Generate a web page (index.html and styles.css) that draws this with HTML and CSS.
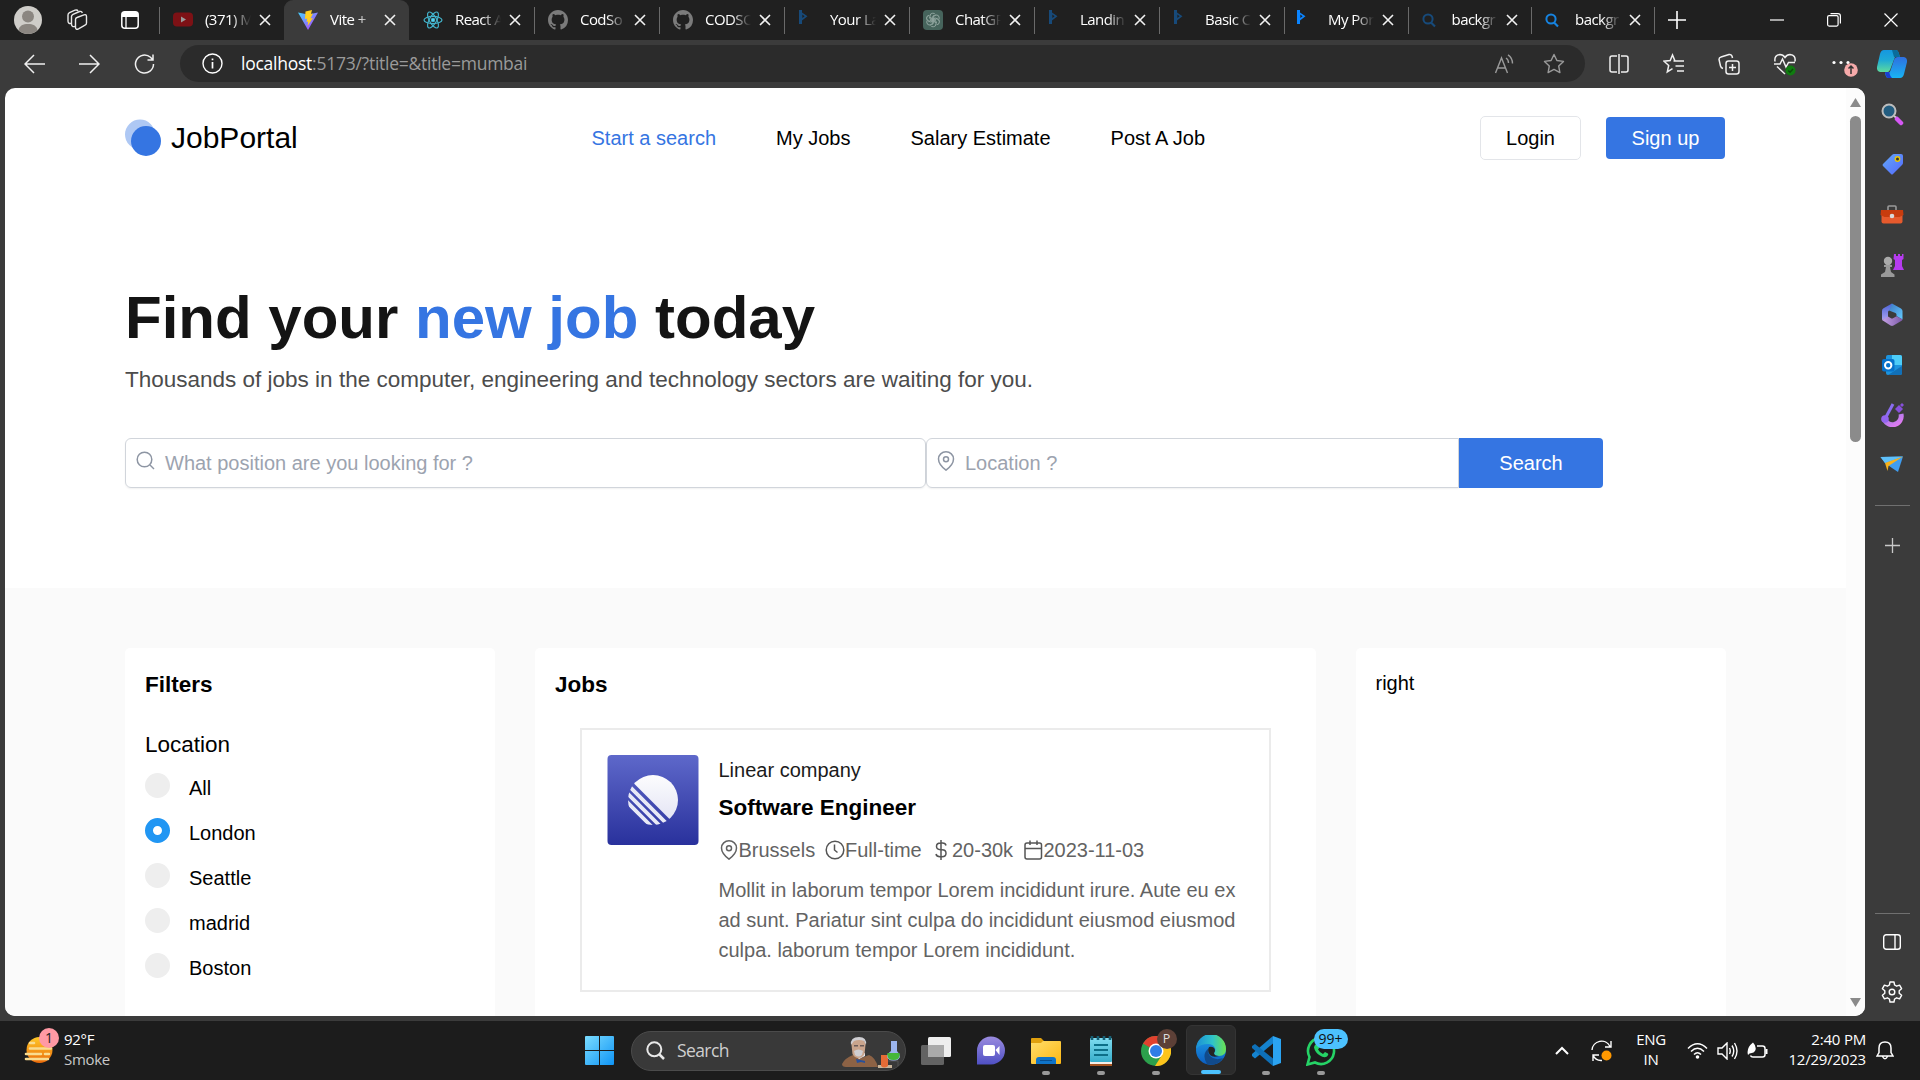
FILE: index.html
```html
<!DOCTYPE html>
<html lang="en">
<head>
<meta charset="utf-8">
<title>JobPortal</title>
<link rel="stylesheet" href="styles.css">
</head>
<body>
<svg class="defs" width="0" height="0" aria-hidden="true">
  <defs>
    <linearGradient id="gVite" x1="0" y1="0" x2="1" y2="1"><stop offset="0" stop-color="#41d1ff"/><stop offset="1" stop-color="#bd34fe"/></linearGradient>
    <linearGradient id="gBlue" x1="0" y1="0" x2="1" y2="1"><stop offset="0" stop-color="#7adcff"/><stop offset="1" stop-color="#0f94f5"/></linearGradient>
    <linearGradient id="gCopA" x1="0" y1="0" x2="0" y2="1"><stop offset="0" stop-color="#1597e0"/><stop offset=".45" stop-color="#1ea9d6"/><stop offset="1" stop-color="#5fdc9c"/></linearGradient>
    <linearGradient id="gCopB" x1="0" y1="0" x2="0" y2="1"><stop offset="0" stop-color="#2f6fe0"/><stop offset="1" stop-color="#18b4f2"/></linearGradient>
    <linearGradient id="gTag" x1="0" y1="0" x2="1" y2="1"><stop offset="0" stop-color="#63a9f6"/><stop offset="1" stop-color="#5468ff"/></linearGradient>
    <linearGradient id="gPurple" x1="0" y1="0" x2="1" y2="1"><stop offset="0" stop-color="#8f7bea"/><stop offset="1" stop-color="#e67bf0"/></linearGradient>
    <linearGradient id="gSun" x1="0" y1="0" x2="0" y2="1"><stop offset="0" stop-color="#ffc928"/><stop offset="1" stop-color="#ea6a0a"/></linearGradient>
    <linearGradient id="gChat" x1="0" y1="0" x2="0" y2="1"><stop offset="0" stop-color="#9a8bdf"/><stop offset="1" stop-color="#4f50c4"/></linearGradient>
    <linearGradient id="gFolder" x1="0" y1="0" x2="1" y2="1"><stop offset="0" stop-color="#ffdd6b"/><stop offset="1" stop-color="#fdb813"/></linearGradient>
    <linearGradient id="gNote" x1="0" y1="0" x2="0" y2="1"><stop offset="0" stop-color="#7fdcf0"/><stop offset="1" stop-color="#38aecb"/></linearGradient>
    <linearGradient id="gEdge" x1="0" y1="0" x2="1" y2="0"><stop offset="0" stop-color="#1b8fd8"/><stop offset=".55" stop-color="#2fc3c9"/><stop offset="1" stop-color="#6be24f"/></linearGradient>
    <linearGradient id="gEdgeB" x1="0" y1="0" x2="0" y2="1"><stop offset="0" stop-color="#1fa0e8"/><stop offset="1" stop-color="#0b5cc0"/></linearGradient>
    <linearGradient id="gLin" x1="0" y1="0" x2="0" y2="1"><stop offset="0" stop-color="#5e68ca"/><stop offset="1" stop-color="#29319c"/></linearGradient>
    <linearGradient id="gLinB" x1="0" y1="0" x2="0" y2="1"><stop offset="0" stop-color="#ffffff"/><stop offset="1" stop-color="#dedff2"/></linearGradient>
    <linearGradient id="gM1" x1="0" y1="0" x2="0" y2="1"><stop offset="0" stop-color="#4a63d8"/><stop offset="1" stop-color="#a9a0ee"/></linearGradient>
    <linearGradient id="gM2" x1="0" y1="0" x2="1" y2="1"><stop offset="0" stop-color="#3c78c4"/><stop offset="1" stop-color="#63cbff"/></linearGradient>
    <linearGradient id="gM3" x1="0" y1="0" x2="1" y2="0"><stop offset="0" stop-color="#c6a2e6"/><stop offset="1" stop-color="#7c5aa8"/></linearGradient>
    <clipPath id="cLin"><circle cx="46" cy="45" r="25"/></clipPath>
    <symbol id="x" viewBox="0 0 12 12"><path d="M1 1l10 10M11 1L1 11" stroke="#f2f2f2" stroke-width="1.600" fill="none"/></symbol>
    <symbol id="git" viewBox="0 0 16 16"><path fill="#7b7b7b" d="M8 0C3.58 0 0 3.58 0 8c0 3.54 2.29 6.53 5.47 7.59.4.07.55-.17.55-.38 0-.19-.01-.82-.01-1.49-2.01.37-2.53-.49-2.69-.94-.09-.23-.48-.94-.82-1.13-.28-.15-.68-.52-.01-.53.63-.01 1.08.58 1.23.82.72 1.21 1.87.87 2.33.66.07-.52.28-.87.51-1.07-1.78-.2-3.64-.89-3.64-3.95 0-.87.31-1.59.82-2.15-.08-.2-.36-1.02.08-2.12 0 0 .67-.21 2.2.82.64-.18 1.32-.27 2-.27s1.36.09 2 .27c1.53-1.04 2.2-.82 2.2-.82.44 1.1.16 1.92.08 2.12.51.56.82 1.27.82 2.15 0 3.07-1.87 3.75-3.65 3.95.29.25.54.73.54 1.48 0 1.07-.01 1.93-.01 2.2 0 .21.15.46.55.38A8.01 8.01 0 0 0 16 8c0-4.42-3.58-8-8-8z"/></symbol>
    <symbol id="pf" viewBox="0 0 20 20"><path d="M1 0h3v2.500l5.500 3.700L4 10.500V14H1z" fill="currentColor"/><path d="M4.300 4.500l2.300 1.700-2.300 1.900z" fill="#202020"/></symbol>
    <symbol id="mag" viewBox="0 0 20 20"><circle cx="8" cy="9" r="4.600" fill="none" stroke="currentColor" stroke-width="2"/><path d="M11 12.500l4 4" stroke="currentColor" stroke-width="2.200"/></symbol>
    <symbol id="pin" viewBox="0 0 24 24"><path d="M12 23s9-7 9-13.500a9 8.500 0 1 0-18 0C3 16 12 23 12 23z" fill="none" stroke="currentColor" stroke-width="1.800"/><circle cx="12" cy="9.800" r="3" fill="none" stroke="currentColor" stroke-width="1.800"/></symbol>
  </defs>
</svg>

<div class="screen">
  <header class="tabstrip">
    <div class="strip-tools">
      <svg class="avatar" width="28" height="28" viewBox="0 0 28 28"><circle cx="14" cy="14" r="14" fill="#cfcdc9"/><circle cx="14" cy="10.500" r="6" fill="#8b8681"/><path d="M4.500 24.200C5.500 19.500 9 18 14 18s8.500 1.500 9.500 6.200a14 14 0 0 1-19 0z" fill="#8b8681"/></svg>
      <svg width="22" height="22" viewBox="0 0 22 22" fill="none" stroke="#e8e8e8" stroke-width="1.400"><path d="M9.500 10.500q0-1.500 1.500-2l7-2.700q2.500-.8 2.500 1.700V14q0 1.500-1.500 2.200l-6.500 3.600q-3 1.500-3-1.500z"/><path d="M9 17.500q-3.500.8-3.500-2.500V7.500Q5.500 6 7 5.300l6.500-2.800q2.300-.7 2.800 1.500M5.300 14.500Q2 15 2 12V6q0-1.500 1.500-2.300L9 1.200q2.300-.7 3 .8"/></svg>
      <svg width="18" height="18" viewBox="0 0 18 18"><rect x=".8" y=".8" width="16.400" height="16.400" rx="3" fill="none" stroke="#fff" stroke-width="1.500"/><path d="M1 6V3q0-2 2-2h12q2 0 2 2v3z" fill="#fff"/><path d="M5 5v12" stroke="#fff" stroke-width="1.300"/></svg>
    </div>
    <nav class="tabs">
      <div class="tab"><svg class="fav" viewBox="0 0 20 20"><rect y="2.500" width="20" height="14" rx="4" fill="#7d1115"/><path d="M8 6.500l5 3-5 3z" fill="#999"/></svg><span class="tt">(371) M</span><svg class="cl"><use href="#x"/></svg></div>
      <div class="tab active"><svg class="fav" viewBox="0 0 20 20"><path d="M0 2.500L10 20 20 2.500 10 4.500z" fill="url(#gVite)"/><path d="M14 0L7.500 1.400 7 9l2.200-.5-.6 3.500 1.700-.5L9.500 16 15 8l-2.500.5L15 3.500l-2 .4z" fill="#ffcf1f"/></svg><span class="tt">Vite + </span><svg class="cl"><use href="#x"/></svg></div>
      <div class="tab nosep"><svg class="fav" viewBox="0 0 20 20" fill="none" stroke="#43b3cb" stroke-width="1.200"><ellipse cx="10" cy="10" rx="9" ry="3.600"/><ellipse cx="10" cy="10" rx="9" ry="3.600" transform="rotate(60 10 10)"/><ellipse cx="10" cy="10" rx="9" ry="3.600" transform="rotate(120 10 10)"/><circle cx="10" cy="10" r="1.600" fill="#61dafb"/></svg><span class="tt">React A</span><svg class="cl"><use href="#x"/></svg></div>
      <div class="tab"><svg class="fav"><use href="#git"/></svg><span class="tt">CodSo</span><svg class="cl"><use href="#x"/></svg></div>
      <div class="tab"><svg class="fav"><use href="#git"/></svg><span class="tt">CODSO</span><svg class="cl"><use href="#x"/></svg></div>
      <div class="tab"><svg class="fav dim"><use href="#pf"/></svg><span class="tt">Your La</span><svg class="cl"><use href="#x"/></svg></div>
      <div class="tab"><svg class="fav" viewBox="0 0 20 20"><rect width="20" height="20" rx="4" fill="#46645c"/><g fill="none" stroke="#8ea39d" stroke-width="1"><path id="k" d="M7 9V6.200q0-3 2.800-3 1.700 0 2.600 1.300M7 9l3 1.800 4.500-2.600"/><use href="#k" transform="rotate(60 10 10)"/><use href="#k" transform="rotate(120 10 10)"/><use href="#k" transform="rotate(180 10 10)"/><use href="#k" transform="rotate(240 10 10)"/><use href="#k" transform="rotate(300 10 10)"/></g></svg><span class="tt">ChatGP</span><svg class="cl"><use href="#x"/></svg></div>
      <div class="tab"><svg class="fav dim"><use href="#pf"/></svg><span class="tt">Landin</span><svg class="cl"><use href="#x"/></svg></div>
      <div class="tab"><svg class="fav dim"><use href="#pf"/></svg><span class="tt">Basic C</span><svg class="cl"><use href="#x"/></svg></div>
      <div class="tab slim"><svg class="fav bright"><use href="#pf"/></svg><span class="tt">My Por</span><svg class="cl"><use href="#x"/></svg></div>
      <div class="tab slim"><svg class="fav dim"><use href="#mag"/></svg><span class="tt">backgr</span><svg class="cl"><use href="#x"/></svg></div>
      <div class="tab slim"><svg class="fav lens"><use href="#mag"/></svg><span class="tt">backgr</span><svg class="cl"><use href="#x"/></svg></div>
    </nav>
    <svg class="plus" width="18" height="18" viewBox="0 0 18 18" stroke="#fff" stroke-width="1.600"><path d="M9 0v18M0 9h18"/></svg>
    <div class="win">
      <svg width="14" height="14" viewBox="0 0 14 14" stroke="#fff" stroke-width="1.200"><path d="M0 7h14"/></svg>
      <svg width="14" height="14" viewBox="0 0 14 14" stroke="#fff" stroke-width="1.200" fill="none"><rect x=".6" y="2.600" width="10.500" height="10.500" rx="1.500"/><path d="M3.500.7h7.500q2.400 0 2.400 2.300v7.500"/></svg>
      <svg width="14" height="14" viewBox="0 0 14 14" stroke="#fff" stroke-width="1.200"><path d="M.5.5l13 13M13.500.5l-13 13"/></svg>
    </div>
  </header>

  <div class="toolbar">
    <div class="nav-btns">
      <svg width="21" height="20" viewBox="0 0 21 20"><path d="M10 1L1 10l9 9M1 10h20"/></svg>
      <svg width="21" height="20" viewBox="0 0 21 20"><path d="M11 1l9 9-9 9M20 10H0"/></svg>
      <svg width="21" height="20" viewBox="0 0 21 20"><path d="M19.500 10a9 9 0 1 1-3-6.700L18.500 5.500M19 .5v5.500h-5.500"/></svg>
    </div>
    <div class="address">
      <svg width="21" height="21" viewBox="0 0 21 21" fill="none" stroke="#fff" stroke-width="1.400"><circle cx="10.500" cy="10.500" r="9.500"/><path d="M10.500 9v6.500M10.500 5.500v1.800" stroke-width="1.700"/></svg>
      <span class="url"><b>localhost</b>:5173/?title=&amp;title=mumbai</span>
      <svg width="20" height="20" viewBox="0 0 20 20" fill="none" stroke="#9a9a9a" stroke-width="1.400"><path d="M1.500 19L7.500 4l6 15M3.500 14h8M12 4q2.500 1.500 2.500 5M14 .8q4.500 3 4.500 8.700"/></svg>
      <svg width="22" height="22" viewBox="0 0 22 22" fill="none" stroke="#9a9a9a" stroke-width="1.400" stroke-linejoin="round"><path d="M11 1.500l2.900 6 6.600.9-4.800 4.600 1.200 6.600-5.900-3.200-5.900 3.200L6.300 13 1.500 8.400l6.600-.9z"/></svg>
    </div>
    <div class="tools">
      <svg width="22" height="22" viewBox="0 0 22 22"><path d="M9 3H4Q2 3 2 5v12q0 2 2 2h5M13 3h5q2 0 2 2v12q0 2-2 2h-5M11 1v20"/></svg>
      <svg width="22" height="22" viewBox="0 0 22 22"><path d="M12 8L9.500 2 7.200 7.500 1 8.200l4.700 4.300L4.300 19l5.200-3.300M10.500 8H21M12.500 13H21M14 18h7"/></svg>
      <svg width="22" height="22" viewBox="0 0 22 22"><rect x="8" y="8" width="13" height="13" rx="2.500"/><path d="M14.500 11v7M11 14.500h7M5 15.500Q3 15 2.500 13L1 6.500Q1 4.500 3 4l8-2.500q2-.5 3 1.500l.5 2"/></svg>
      <svg width="24" height="24" viewBox="0 0 24 24"><path d="M2 9.500Q1 3 7 2.500q3 0 5 3 2-3 5-3 6 .5 5 7M1 12h6l2.500-5 3.500 8 2.500-4.500H22M4 14.500l8 7.500"/><circle cx="17.500" cy="18.500" r="5" fill="#107c10" stroke="none"/><path d="M15.300 18.500l1.700 1.700 3-3.200" stroke="#0a4a0a"/></svg>
      <svg width="26" height="28" viewBox="0 0 26 28"><g fill="#fff" stroke="none"><circle cx="2" cy="12.500" r="1.600"/><circle cx="9" cy="12.500" r="1.600"/><circle cx="16" cy="12.500" r="1.600"/></g><circle cx="19" cy="20" r="6.800" fill="#f6aaaa" stroke="none"/><path d="M19 24v-8M16.500 18.500l2.500-2.500 2.500 2.500" stroke="#333"/></svg>
    </div>
    <svg class="copilot" width="30" height="28" viewBox="0 0 30 28"><path d="M7 0h12q2 0 3 4l1 3h-5L13 20q-1.500 3-5 2H3q-3.500-.5-3-5L3 4q1-4 4-4z" fill="url(#gCopA)"/><path d="M15 0h4q2 0 3 4l1 3h-6z" fill="#0a6c9c"/><path d="M23 28H11q-2 0-3-5h3q2 0 3-4l3-9q1-3 4-3h6q3.500.5 3 5l-3 12q-1 4-4 4z" fill="url(#gCopB)"/><path d="M8 22h4q1 4 3 6h-4q-2 0-3-6z" fill="#1b3fd0"/></svg>
  </div>

  <div class="middle">
    <main class="page">
      <div class="content">
        <div class="navbar">
          <div class="brand"><svg width="37" height="38" viewBox="0 0 37 38"><circle cx="15" cy="15.500" r="15" fill="#aec8f4"/><circle cx="21" cy="22" r="15" fill="#3575e2"/></svg><span>JobPortal</span></div>
          <div class="links"><a class="on">Start a search</a><a>My Jobs</a><a>Salary Estimate</a><a>Post A Job</a></div>
          <div class="auth"><a class="login">Login</a><a class="signup">Sign up</a></div>
        </div>
        <section class="hero">
          <h1>Find your <em>new job</em> today</h1>
          <p>Thousands of jobs in the computer, engineering and technology sectors are waiting for you.</p>
          <div class="search">
            <div class="field what"><svg width="20" height="20" viewBox="0 0 20 20" fill="none" stroke="#8d95a3" stroke-width="1.500"><circle cx="8.500" cy="8.500" r="7.300"/><path d="M14 14l4 4"/></svg><span>What position are you looking for ?</span></div>
            <div class="field where"><svg width="20" height="20"><use href="#pin"/></svg><span>Location ?</span></div>
            <div class="go">Search</div>
          </div>
        </section>
        <section class="board">
          <aside class="card filters">
            <h2>Filters</h2>
            <h3>Location</h3>
            <ul>
              <li><i></i>All</li><li><i class="sel"></i>London</li><li><i></i>Seattle</li><li><i></i>madrid</li><li><i></i>Boston</li>
            </ul>
          </aside>
          <div class="card jobs">
            <h2>Jobs</h2>
            <article class="job">
              <svg class="logo" width="92" height="90" viewBox="0 0 92 90"><rect x=".5" width="91" height="90" rx="4" fill="url(#gLin)"/><g clip-path="url(#cLin)"><path d="M18 19.500L74 75.500V15H18z" fill="url(#gLinB)"/><g stroke="#e8e9f6" stroke-width="3.800"><path d="M14 23l60 60M14 32l60 60M14 41l60 60"/></g></g></svg>
              <div class="info">
                <div class="co">Linear company</div>
                <h4>Software Engineer</h4>
                <div class="meta">
                  <span><svg width="20" height="20"><use href="#pin"/></svg>Brussels</span>
                  <span><svg width="20" height="20" viewBox="0 0 20 20"><circle cx="10" cy="10" r="8.800"/><path d="M9.500 4.500V10l3 2.500"/></svg>Full-time</span>
                  <span><svg width="20.500" height="20" viewBox="0 0 20.500 20"><path d="M10 0v20M15 5.500Q14.500 3 11.500 3H9.500Q5.500 3 5.500 6.300t4 3.400h1.500q4 0 4 3.500t-4 3.500H9Q5.500 16.700 5 14"/></svg>20-30k</span>
                  <span><svg width="20.500" height="20" viewBox="0 0 20.500 20"><rect x="2" y="3" width="16.500" height="16" rx="2"/><path d="M2 8.500h16.500M7 .5V5M14 .5V5"/></svg>2023-11-03</span>
                </div>
                <p>Mollit in laborum tempor Lorem incididunt irure. Aute eu ex ad sunt. Pariatur sint culpa do incididunt eiusmod eiusmod culpa. laborum tempor Lorem incididunt.</p>
              </div>
            </article>
          </div>
          <aside class="card right">right</aside>
        </section>
      </div>
      <div class="scroll"><svg width="11" height="9" viewBox="0 0 11 9"><path d="M5.500 0L11 9H0z" fill="#8b8b8b"/></svg><div class="thumb"></div><svg class="down" width="11" height="9" viewBox="0 0 11 9"><path d="M5.500 9L11 0H0z" fill="#8b8b8b"/></svg></div>
    </main>
    <aside class="side">
      <div class="apps">
        <svg viewBox="0 0 24 24"><path d="M14 14l4 3" stroke="#ccc" stroke-width="2"/><path d="M17 17l4 4" stroke="#d658f5" stroke-width="4.500" stroke-linecap="round"/><circle cx="9" cy="9" r="6.500" fill="#235d80" stroke="#bdbdbd" stroke-width="2"/></svg>
        <svg viewBox="0 0 24 24"><path d="M14 2h7q2 0 2 2v7q0 1-1 2l-9 9q-1 1-2 0l-8-8q-1-1 0-2l9-9q1-1 2-1z" fill="url(#gTag)"/><circle cx="17.500" cy="7" r="2.200" fill="#333" stroke="#e8c60a" stroke-width="1.400"/></svg>
        <svg viewBox="0 0 24 24"><path d="M8 8V5q0-1 1-1h6q1 0 1 1v3" fill="none" stroke="#9a9a9a" stroke-width="1.600"/><rect x="1.500" y="11" width="21" height="10.500" rx="2" fill="#e65a2d"/><path d="M1 8h22l.5 5-4 2h-15L.5 13z" fill="#c83c0e"/><circle cx="12" cy="14" r="2.300" fill="#d9d9d9"/></svg>
        <svg viewBox="0 0 24 24"><path d="M14 1h2v2h2V1h2v2h2V1h1.500v5L22 7v6l2 4H13l2-4V7l-1.500-1z" fill="#b63bf0"/><circle cx="8" cy="8" r="4.200" fill="#aaa"/><path d="M4 12h8v2h-2l1 5 3.500 2.500V24H1v-2.500L5 19l1-5H4z" fill="#999"/></svg>
        <svg viewBox="0 0 24 24"><path d="M12 .5L3.500 5.200Q2 6 2 8v9l6-2.500V9q0-1 1-1.600l3.500-2z" fill="url(#gM1)"/><path d="M12 .5l9 5q1.500 1 1.500 2.500v8.500L16.500 13v-1.500q0-1-1-1.600L9 7.500z" fill="url(#gM2)"/><path d="M2 17l6-3.500 3 1.700q1 .5 2 0l3.500-2 6 3-.5 1.300-8.500 5q-1.500.9-3 0z" fill="url(#gM3)"/></svg>
        <svg viewBox="0 0 24 24"><rect x="6" y="2" width="16" height="20" rx="2" fill="#1d94dd"/><path d="M12 2h8q2 0 2 2v8H12z" fill="#4dcdf8"/><path d="M8 22l14-9v7q0 2-2 2z" fill="#1170b8"/><rect x="2" y="6" width="12.500" height="12.500" rx="2" fill="#0672cb"/><circle cx="8.200" cy="12.200" r="3.200" fill="none" stroke="#fff" stroke-width="2"/></svg>
        <svg viewBox="0 0 24 24"><path d="M4 15a8.500 8.500 0 1 0 17-4" fill="none" stroke="url(#gPurple)" stroke-width="5"/><path d="M13 1L6 14" stroke="#8a6cf0" stroke-width="3"/><circle cx="5" cy="16" r="3.800" fill="#9264ee"/><path d="M15 6l4-4 4 4-4 4zM20 2l2-2 2 2-2 2z" fill="#8750dc"/></svg>
        <svg viewBox="0 0 24 24"><path d="M.5 4L23 3.500 18 19l-6-4-7-5z" fill="#3f9df0"/><path d="M.5 4L23 3.500 5 10z" fill="#5fc1fb"/><path d="M5 10l18-6.500L8.500 13 7.500 18z" fill="#f7b21c"/></svg>
      </div>
      <hr>
      <svg class="add" width="15" height="15" viewBox="0 0 15 15" stroke="#c9c9c9" stroke-width="1.300"><path d="M7.500 0v15M0 7.500h15"/></svg>
      <hr class="low">
      <svg class="panel" width="18" height="16" viewBox="0 0 18 16" fill="none" stroke="#fff" stroke-width="1.400"><rect x=".7" y=".7" width="16.600" height="14.600" rx="2.500"/><path d="M12 1v14"/></svg>
      <svg class="gear" width="22" height="22" viewBox="0 0 22 22" fill="none" stroke="#fff" stroke-width="1.400" stroke-linejoin="round"><path d="M9 1h4l.6 3 2 1.200 3-1 2 3.500-2.400 2.100v2.400l2.400 2.100-2 3.500-3-1-2 1.200L13 21H9l-.6-3-2-1.200-3 1-2-3.500 2.400-2.100V9.800L1.400 7.700l2-3.500 3 1 2-1.200z"/><circle cx="11" cy="11" r="2.800"/></svg>
    </aside>
  </div>

  <footer class="taskbar">
    <div class="weather">
      <div class="wicon"><svg width="30" height="30" viewBox="0 0 30 30"><circle cx="15.500" cy="14" r="13" fill="url(#gSun)"/><g stroke="#f9dc90" stroke-width="2.600" stroke-linecap="round"><path d="M6 7h4M6 12.500h21M2 18h15M21 18h4M2 23h22"/></g></svg><span class="wbadge">1</span></div>
      <div class="wtext"><span>92°F</span><span class="soft">Smoke</span></div>
    </div>
    <svg class="start" width="29" height="29" viewBox="0 0 29 29"><path d="M0 1q0-1 1-1h13v14H0zM15 0h13q1 0 1 1v13H15zM0 15h14v14H1q-1 0-1-1zM15 15h14v13q0 1-1 1H15z" fill="url(#gBlue)"/></svg>
    <div class="tsearch">
      <svg width="19" height="19" viewBox="0 0 19 19" fill="none" stroke="#e8e8e8" stroke-width="2"><circle cx="8.300" cy="8.300" r="7"/><path d="M13.500 13.500l4.500 4.500" stroke-width="2.500"/></svg>
      <span>Search</span>
      <svg class="scene" width="58" height="32" viewBox="0 0 58 32"><path d="M0 27q3-6 11-9l8 3 8-3q6 2 9 12H4q-4 0-4-3z" fill="#8c6245"/><path d="M12 17l5 5 6-3v-3z" fill="#e9e9ee"/><path d="M14 22l9 2v2l-4-1-4 1z" fill="#28509b"/><path d="M9.500 8q0-6 7-6t7 6l-1 9q-2 4-6 4t-6-4z" fill="#c9a48c"/><path d="M9 8q-1-8 8-8 8 0 7 8l-2-4q-5-2-10 0zM12 14q4.500-3 9 0l-1 4q-3.500 3-7 0z" fill="#cfced2"/><path d="M12 8h4v1.500h-4zM18 8h4v1.500h-4z" fill="#6b5b58"/><path d="M36 28h14v3H36z" fill="#c8b59b"/><path d="M39 18h7v11q-4 3-7 0z" fill="#e66b36"/><path d="M49 4h6v10q3 3 3 6-2 4-6.500 4T45 20q0-3 4-6z" fill="#9cb5ee"/><path d="M45.500 16h12q1 7-6 7-7 0-6-7z" fill="#45b739"/><path d="M46 24h10v5" fill="none" stroke="#555"/></svg>
    </div>
    <div class="tapps">
      <div class="app"><svg width="30" height="28" viewBox="0 0 30 28"><rect y="8" width="23" height="20" rx="1.500" fill="#636363"/><rect x="7" width="23" height="20" rx="1.500" fill="#eee"/><path d="M7 8h16v12H7z" fill="#aaa"/></svg></div>
      <div class="app"><svg class="chat" width="29" height="29" viewBox="0 0 29 29"><path d="M1 28.500V15A14 14 0 1 1 15 28.500z" fill="url(#gChat)"/><rect x="7" y="9" width="12" height="11" rx="2" fill="#fff"/><path d="M19.500 14l4-4v9z" fill="#fff"/></svg></div>
      <div class="app run"><svg width="30" height="28" viewBox="0 0 30 28"><path d="M0 2q0-1 1-1h9l3 3h6v5H0z" fill="#e0a00e"/><path d="M0 6h10l2-2h17q1 0 1 1v21q0 1-1 1H1q-1 0-1-1z" fill="url(#gFolder)"/><path d="M5 27v-4q0-3 3-3h14q3 0 3 3v4z" fill="#0f74c9"/><path d="M9 23.500h12" stroke="#084f92"/></svg></div>
      <div class="app run"><svg width="24" height="30" viewBox="0 0 24 30"><path d="M1 26h22v4H1z" fill="#a65420"/><path d="M1 25h22v3H1z" fill="#f5eee8"/><rect x="1" y="2" width="22" height="24" rx="1" fill="url(#gNote)"/><path d="M3 0v4M9 0v4M15 0v4M21 0v4" stroke="#165f74" stroke-width="2.600"/><path d="M5 9h14M5 14h14M5 19h14" stroke="#0d6f88" stroke-width="2"/></svg></div>
      <div class="app run"><svg width="30" height="30" viewBox="0 0 30 30"><circle cx="15" cy="15" r="15" fill="#2ca04c"/><path d="M15 15L2 7.500a15 15 0 0 1 26 0z" fill="#e1412e"/><path d="M15 8h13.300A15 15 0 0 1 14 30l7-11z" fill="#fdc41c"/><circle cx="15" cy="15" r="7.500" fill="#fff"/><circle cx="15" cy="15" r="6" fill="#2f7de6"/></svg><span class="prof">P</span></div>
      <div class="app run cur"><svg width="30" height="30" viewBox="0 0 30 30"><circle cx="15" cy="15" r="15" fill="url(#gEdgeB)"/><path d="M0 14A15 15 0 0 1 30 14q0 7-7 7-5 0-5-3 2-2 1-5-2-4-7-4Q4 9 0 14z" fill="url(#gEdge)"/><path d="M11 29Q5 19 13 13q-2 4 1 8 5 5 13 2-6 9-16 6z" fill="#114a8b"/><path d="M13 12q5-1 6 3 0 2-1 3 0 3 5 3-6 2-9-1-3-4-1-8z" fill="#242424"/></svg></div>
      <div class="app run"><svg width="30" height="30" viewBox="0 0 30 30"><path d="M22 7.500L4 22.500 1 20v-2L22 0z" fill="#1583cf"/><path d="M22 22.500L4 8 1 10v2l21 18z" fill="#0e70b8"/><path d="M22 0l8 3v24l-8 3z" fill="#2ba4f2"/></svg></div>
      <div class="app run"><svg width="30" height="30" viewBox="0 0 30 30"><path d="M1.500 28.500l2-7.500A13 13 0 1 1 9 26.500z" fill="none" stroke="#25d366" stroke-width="2.600"/><path d="M10 8q2-1 3 2l.5 1.500-1.500 2q2 3.500 5 4.500l2-2 3 1.500q1 1-1 3-3 2-7-1-5-3-6-8 0-2 2-3.500z" fill="#25d366"/></svg><span class="count">99+</span></div>
    </div>
    <div class="tray">
      <svg class="chev" width="14" height="9" viewBox="0 0 14 9" fill="none" stroke="#fff" stroke-width="2"><path d="M1 8l6-6 6 6"/></svg>
      <svg class="sync" width="22" height="22" viewBox="0 0 22 22" fill="none" stroke="#fff" stroke-width="1.400"><path d="M1 10A9.500 9.500 0 0 1 19 6.500M20 1v6h-6M11 20.500a9 9 0 0 1-9-5.500M8 15H2v6"/><circle cx="15.500" cy="15.500" r="5" fill="#ff9800" stroke="none"/></svg>
      <div class="lang">ENG<br>IN</div>
      <svg class="wifi" width="21" height="18" viewBox="0 0 21 18" fill="none" stroke="#fff" stroke-width="1.500"><path d="M1 6.500q9.500-9.500 19 0M4 9.500q6.500-6.500 13 0M7 12.500q3.500-3.500 7 0"/><circle cx="10.500" cy="15" r="1.800" fill="#fff" stroke="none"/></svg>
      <svg class="vol" width="21" height="18" viewBox="0 0 21 18" fill="none" stroke="#fff" stroke-width="1.400"><path d="M1 6h4l5-5v16l-5-5H1zM12.500 6q1.500 3 0 6M15 3.500q3.500 5.500 0 11M17.500 1q5 8 0 16"/></svg>
      <svg class="bat" width="21" height="18" viewBox="0 0 21 18" fill="none" stroke="#fff" stroke-width="1.500"><path d="M10 4h5.500q2.500 0 2.500 2.500v6q0 2.500-2.500 2.500H6q-2 0-2.500-1.500"/><path d="M19.500 7v5" stroke-width="2"/><path d="M1 13q-2-7 5-12.500Q9.500 4 8.500 8q-1 3-6 3.500z" fill="#fff" stroke="none"/></svg>
      <div class="clock">2:40 PM<br>12/29/2023</div>
      <svg class="bell" width="18" height="19" viewBox="0 0 18 19" fill="none" stroke="#fff" stroke-width="1.500"><path d="M1 15l2-3.500V7q0-6 6-6t6 6v4.500l2 3.500zM6.500 15.500q2.500 4.500 5 0"/></svg>
    </div>
  </footer>
</div>
</body>
</html>
```
FILE: styles.css
```css
* { box-sizing: border-box; }
body { margin: 0; background: #3b3b3b; font-family: "Liberation Sans", Arial, sans-serif; }
svg { display: block; flex: none; }
.defs { position: absolute; }
h1, h2, h3, h4, p, ul { margin: 0; padding: 0; }
.screen { width: 1920px; height: 1080px; overflow: hidden; display: flex; flex-direction: column; }

/* browser tab strip */
.tabstrip { height: 40px; background: #202020; display: flex; align-items: center; flex: none; font-family: "Open Sans", sans-serif; }
.strip-tools { width: 159px; padding-left: 14px; display: flex; align-items: center; flex: none; }
.strip-tools svg + svg { margin-left: 24px; }
.strip-tools svg + svg + svg { margin-left: 33px; }
.tabs { display: flex; height: 40px; flex: none; }
.tab { width: 125px; display: flex; align-items: center; border-left: 1px solid #666; border-image: linear-gradient(transparent 8px, #6a6a6a 8px, #6a6a6a 33px, transparent 33px) 1; padding-left: 13px; }
.tab.slim { width: 123.500px; padding-left: 11px; }
.tab.slim:last-child { border-right: 1px solid #666; }
.tab.active { background: #3b3b3b; border-image: none; border-color: #3b3b3b; border-radius: 9px 9px 0 0; }
.tab.nosep { border-image: none; border-color: transparent; }
.fav { width: 20px; height: 20px; }
.dim { color: #174a7a; }
.bright { color: #0a84ff; }
.lens { color: #1683e0; }
.tt { width: 56px; margin-left: 12px; padding-bottom: 1px; white-space: nowrap; font-size: 15px; line-height: 21px; letter-spacing: -0.55px; color: #fff; -webkit-mask-image: linear-gradient(90deg, #000 27px, transparent 46px); mask-image: linear-gradient(90deg, #000 27px, transparent 46px); }
.cl { width: 12px; height: 12px; margin-left: -2px; }
.plus { margin-left: 13px; margin-bottom: 1px; }
.win { display: flex; margin-left: auto; margin-right: 22px; margin-bottom: 1px; gap: 43px; }

/* browser toolbar */
.toolbar { height: 48px; flex: none; display: flex; align-items: center; padding-bottom: 1px; }
.nav-btns { width: 180px; padding-left: 24px; display: flex; gap: 34px; flex: none; fill: none; stroke: #f0f0f0; stroke-width: 1.500px; }
.address { width: 1405px; height: 37px; border-radius: 19px; background: #2b2b2b; display: flex; align-items: center; padding: 0 20px 0 22px; flex: none; }
.url { flex: 1; margin-left: 18px; padding-bottom: 1px; font: 17.500px "Open Sans", sans-serif; letter-spacing: -0.25px; color: #9a9a9a; }
.url b { font-weight: 400; color: #fff; }
.address svg:last-child { margin-left: 29px; }
.tools { display: flex; align-items: center; gap: 33px; margin-left: 23px; fill: none; stroke: #f0f0f0; stroke-width: 1.500px; }
.tools svg:last-child { margin-left: 2px; }
.copilot { margin-left: 19px; }

/* viewport and edge sidebar */
.middle { height: 933px; display: flex; flex: none; padding-left: 5px; }
.page { width: 1860px; height: 928px; background: #fff; border-radius: 10px; overflow: hidden; display: flex; }
.content { width: 1841px; overflow: hidden; }
.scroll { width: 19px; background: #fcfcfc; display: flex; flex-direction: column; align-items: center; padding: 10px 0 9px; }
.thumb { width: 11px; height: 326px; border-radius: 6px; background: #8b8b8b; margin-top: 9px; }
.down { margin-top: auto; }
.side { width: 55px; display: flex; flex-direction: column; align-items: center; padding: 14px 1px 0 0; }
.apps { display: flex; flex-direction: column; gap: 26.200px; }
.apps svg { width: 24px; height: 24px; }
.side hr { width: 35px; height: 1px; border: 0; background: #707070; margin: 28px 0 0; }
.side .add { margin-top: 32px; }
.side .low { margin-top: 360px; }
.panel { margin-top: 20px; }
.gear { margin-top: 31px; }

/* site header */
.navbar { height: 100px; margin: 0 121px 0 120px; display: grid; grid-template-columns: 466.500px 1fr auto; align-items: center; font-size: 20px; }
.brand { display: flex; align-items: center; gap: 9px; font-size: 30px; color: #000; }
.links { display: flex; gap: 60px; }
.on { color: #3575e2; }
.auth { display: flex; align-items: center; gap: 25px; }
.login { width: 101px; height: 44px; line-height: 42px; border: 1px solid #e3e5e9; border-radius: 5px; text-align: center; }
.signup { width: 119px; height: 42px; line-height: 42px; background: #3575e2; color: #fff; border-radius: 4px; text-align: center; }

/* hero */
.hero { height: 400px; padding: 100px 120px 0; }
.hero h1 { font-size: 60px; line-height: 60px; color: #141414; }
.hero em { font-style: normal; color: #3575e2; }
.hero p { font-size: 22.500px; line-height: 35px; margin-top: 14px; color: #4c4c4c; }
.search { display: flex; height: 50px; margin-top: 41px; }
.field { display: flex; align-items: center; border: 1.500px solid #d1d5db; color: #9ca3af; font-size: 20px; padding-left: 10px; gap: 9px; }
.field svg { color: #8d95a3; margin-bottom: 4px; }
.what { width: 801px; border-radius: 6px; box-shadow: 0 1px 2px rgba(0,0,0,.06); }
.where { width: 533px; border-radius: 6px 0 0 6px; box-shadow: 0 1px 2px rgba(0,0,0,.06); padding-left: 9px; }
.go { width: 144px; background: #3575e2; color: #fff; font-size: 20px; line-height: 50px; text-align: center; border-radius: 0 4px 4px 0; }

/* listing */
.board { background: #fafafa; height: 900px; padding: 60px 120px; display: grid; grid-template-columns: 370px 781.500px 370px; column-gap: 39.500px; }
.card { background: #fff; border-radius: 5px; padding: 20px; }
.card h2 { font-size: 22.500px; line-height: 34px; padding-bottom: 1px; font-weight: 700; }
.card h3 { font-size: 22.500px; line-height: 34px; font-weight: 400; margin-top: 25px; }
.card ul { list-style: none; margin-top: 11px; }
.card li { display: flex; gap: 19px; height: 45px; font-size: 20px; line-height: 30px; }
.card li i { width: 25px; height: 25px; border-radius: 50%; background: #eee; flex: none; }
.card li .sel { border: 8px solid #2196f3; background: #fff; }
.jobs { padding-left: 20.500px; }
.right { font-size: 20px; line-height: 30px; }
.job { margin: 25px 25px 0; width: 691px; height: 264px; border: 2px solid #ebebeb; padding: 25px; display: flex; gap: 19.500px; }
.info { width: 525px; font-size: 20px; color: #636363; }
.co { line-height: 30px; color: #1b1b1b; }
.info h4 { font-size: 22.500px; line-height: 35px; margin-top: 5px; color: #000; }
.meta { display: flex; gap: 9.800px; margin-top: 10px; line-height: 30px; }
.meta span { display: flex; align-items: center; }
.meta svg { fill: none; stroke: #555; stroke-width: 1.500px; }
.info p { line-height: 30px; margin-top: 10px; }

/* taskbar */
.taskbar { height: 59px; background: #1c1c1c; color: #fff; display: flex; align-items: center; flex: none; font-family: "Open Sans", sans-serif; font-size: 15px; }
.weather { width: 585px; padding-left: 24px; display: flex; align-items: center; gap: 10px; flex: none; }
.wicon { position: relative; }
.wbadge { position: absolute; left: 15px; top: -8px; width: 20px; height: 20px; border-radius: 50%; background: #ff99a4; color: #222; text-align: center; line-height: 20px; font-size: 14px; }
.wtext { display: flex; flex-direction: column; line-height: 20px; letter-spacing: -0.3px; padding-bottom: 4px; }
.soft { color: #c8c8c8; }
.tsearch { width: 275px; height: 40px; margin-left: 17px; border-radius: 20px; border: 1px solid #4b4b4b; background: #393939; display: flex; align-items: center; padding-left: 14px; flex: none; font-size: 17.500px; color: #cfcfcf; }
.tsearch span { margin-left: 12px; width: 60px; letter-spacing: -0.6px; padding-bottom: 2px; }
.scene { margin-left: 105px; margin-top: 4px; }
.tapps { display: flex; margin-left: 2.500px; flex: none; }
.app { width: 55px; height: 51px; display: flex; align-items: center; justify-content: center; position: relative; }
.chat { margin-right: 2px; }
.run::after { content: ""; position: absolute; left: 23.500px; bottom: 1px; width: 8px; height: 4px; border-radius: 2px; background: #999; }
.cur { width: 50px; margin: 0 2.500px; height: 50px; background: #2b2b2b; border: 1px solid #343434; border-radius: 6px; }
.cur::after { left: 14px; bottom: 0; width: 20px; background: #4cc2ff; }
.prof { position: absolute; left: 28px; top: 4px; width: 20px; height: 20px; border-radius: 50%; background: #5d4037; color: #ddd; font-size: 12.500px; line-height: 20px; text-align: center; }
.count { position: absolute; left: 20px; top: 4px; width: 34px; height: 20px; border-radius: 10px; background: #4cc2ff; color: #111; font-size: 14px; line-height: 20px; text-align: center; }
.tray { display: flex; align-items: center; margin-left: auto; padding-right: 26px; line-height: 20px; letter-spacing: -0.3px; }
.chev { margin-right: -1px; }
.sync { margin-left: 23px; }
.lang { width: 40px; margin-left: 18px; text-align: center; padding-bottom: 3px; }
.wifi { margin-left: 16px; }
.vol { margin-left: 9px; }
.bat { margin-left: 9px; }
.clock { width: 98px; text-align: right; padding-bottom: 4px; letter-spacing: -0.2px; }
.bell { margin-left: 10px; }
```
